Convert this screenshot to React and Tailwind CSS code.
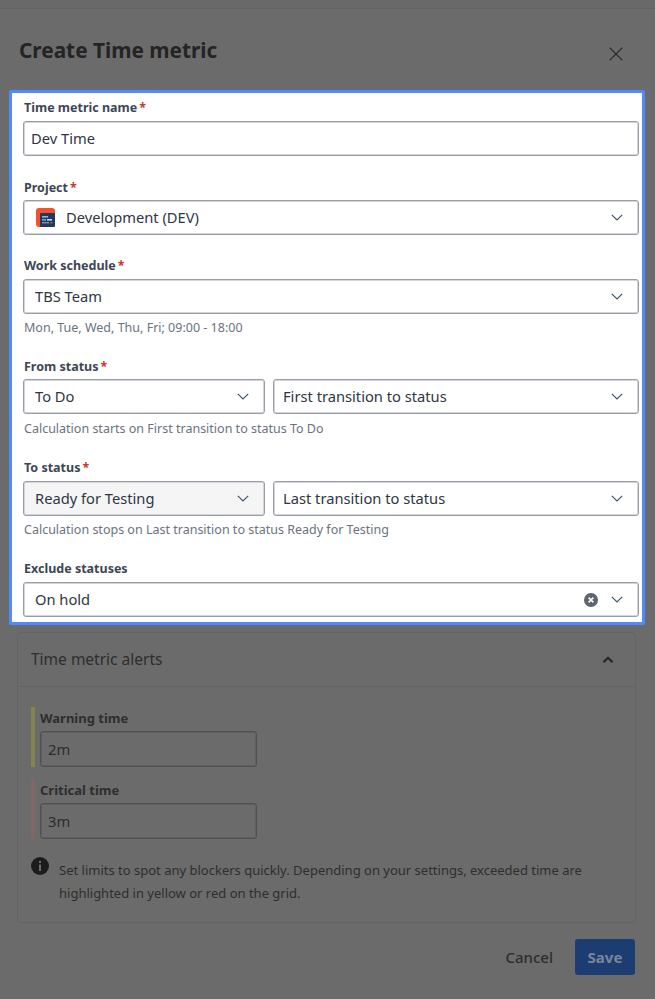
import React from "react";

const Chevron = ({ className = "text-[#42526e]" }) => (
  <svg width="12" height="7" viewBox="0 0 12 7" fill="none" className={className}>
    <path d="M.8.9 6 5.9 11.2.9" stroke="currentColor" strokeWidth="1.2" />
  </svg>
);

const Label = ({ children, req, className = "" }) => (
  <div className={`h-5 pl-[1px] pt-[1px] flex items-center text-[12.5px] font-bold leading-5 text-[#3d4655] ${className}`}>
    {children}
    {req && <span className="text-[#c9372c] ml-[2px]">*</span>}
  </div>
);

const Select = ({ children, className = "", bg = "bg-white", px = "pl-[11px]" }) => (
  <div className={`h-[35px] ${bg} ${px} pr-[15px] flex items-center justify-between rounded-[3px] border border-[#9a9da5] shadow-[inset_0_0_0_1px_#d4d5d9] text-[14.7px] text-[#2f3642] ${className}`}>
    <span className="flex items-center min-w-0">{children}</span>
    <Chevron />
  </div>
);

const Hint = ({ children, className = "" }) => (
  <div className={`pl-[1px] text-[12.5px] leading-4 text-[#6b7280] ${className}`}>{children}</div>
);

const ProjectIcon = () => (
  <svg width="19" height="19" viewBox="0 0 19 19" className="mr-[11px] shrink-0">
    <rect width="19" height="19" rx="3" fill="#f0532d" />
    <rect x="4" y="5" width="15" height="14" rx="1" fill="#1f3a5f" />
    <rect x="6" y="8" width="6" height="1.6" fill="#9fb4cc" />
    <rect x="6" y="11" width="4" height="1.6" fill="#5fb0d0" />
    <rect x="11" y="11" width="5" height="1.6" fill="#c9d6e4" />
    <rect x="6" y="14" width="7" height="1.4" fill="#7f95ad" />
    <rect x="14.5" y="14" width="2" height="1.4" fill="#e2563a" />
  </svg>
);

const TimeField = ({ label, value, bar, className = "" }) => (
  <div className={`flex h-[60px] ${className}`}>
    <div className={`w-1 ${bar} mr-[5px]`} />
    <div>
      <div className="h-[24px] flex items-center text-[13px] font-bold text-[#2e2e2e]">{label}</div>
      <div className="w-[217px] h-[36px] px-[7px] flex items-center rounded-[3px] border border-[#505050] shadow-[inset_0_0_0_1px_#606060] text-[14.7px] text-[#2b2b2b]">
        {value}
      </div>
    </div>
  </div>
);

export default function App() {
  return (
    <div className="w-[655px] h-[999px] bg-[#6b6b6b] overflow-hidden" style={{ fontFamily: '"Noto Sans", sans-serif' }}>
      <div className="h-[9px] border-b border-[#636363] bg-[#696969]" />
      <div className="h-[81px] pl-[19px] pr-[32px] pt-[26px] flex justify-between items-start">
        <h1 className="text-[20.8px] font-bold leading-[30px] text-[#242424]">Create Time metric</h1>
        <svg width="14" height="14" viewBox="0 0 14 14" fill="none" className="mt-[12px] text-[#2a2a2a]">
          <path d="M.6.6l12.8 12.8M13.4.6.6 13.4" stroke="currentColor" strokeWidth="1.3" />
        </svg>
      </div>

      <div className="ml-[9px] w-[636px] h-[535px] bg-white border-[3px] border-[#4f8bff] pl-[11px] pr-[3px] pt-[4px] rounded-[2px]">
        <Label req>Time metric name</Label>
        <div className="mt-[4px] h-[35px] pl-[7px] flex items-center rounded-[3px] border border-[#9a9da5] shadow-[inset_0_0_0_1px_#d4d5d9] text-[14.7px] text-[#2f3642]">
          Dev Time
        </div>

        <Label req className="mt-[21px]">Project</Label>
        <Select px="pl-[12px]" className="mt-[3px]"><ProjectIcon />Development (DEV)</Select>

        <Label req className="mt-[20px]">Work schedule</Label>
        <Select className="mt-[4px]">TBS Team</Select>
        <Hint className="mt-[6px]">Mon, Tue, Wed, Thu, Fri; 09:00 - 18:00</Hint>

        <Label req className="mt-[20px]">From status</Label>
        <div className="mt-[3px] flex gap-[8px]">
          <Select className="w-[242px]">To Do</Select>
          <Select px="pl-[9px]" className="flex-1">First transition to status</Select>
        </div>
        <Hint className="mt-[7px]">Calculation starts on First transition to status To Do</Hint>

        <Label req className="mt-[20px]">To status</Label>
        <div className="mt-[4px] flex gap-[8px]">
          <Select bg="bg-[#f5f5f5]" className="w-[242px]">Ready for Testing</Select>
          <Select px="pl-[9px]" className="flex-1">Last transition to status</Select>
        </div>
        <Hint className="mt-[6px]">Calculation stops on Last transition to status Ready for Testing</Hint>

        <Label className="mt-[20px]">Exclude statuses</Label>
        <div className="mt-[4px] h-[35px] pl-[11px] pr-[15px] flex items-center justify-between rounded-[3px] border border-[#9a9da5] shadow-[inset_0_0_0_1px_#d4d5d9] text-[14.7px] text-[#2f3642]">
          <span>On hold</span>
          <span className="flex items-center gap-[13px]">
            <svg width="14" height="14" viewBox="0 0 14 14" fill="none">
              <circle cx="7" cy="7" r="7" fill="#5e6470" />
              <path d="M4.6 4.6l4.8 4.8M9.4 4.6 4.6 9.4" stroke="#fff" strokeWidth="1.6" />
            </svg>
            <Chevron />
          </span>
        </div>
      </div>

      <div className="ml-[17px] mt-[7px] w-[619px] h-[291px] rounded-[4px] border border-[#646464]">
        <div className="h-[54px] pl-[13px] pr-[21px] flex items-center justify-between border-b border-[#646464]">
          <span className="text-[15.5px] text-[#2e2e2e]">Time metric alerts</span>
          <svg width="12" height="8" viewBox="0 0 12 8" fill="none">
            <path d="M1.5 6.2 6 1.8l4.5 4.4" stroke="#222" strokeWidth="2" />
          </svg>
        </div>
        <div className="pl-[13px] pt-[20px]">
          <TimeField label="Warning time" value="2m" bar="bg-[#87834f]" />
          <TimeField label="Critical time" value="3m" bar="bg-[#846664]" className="mt-[12px]" />
          <div className="flex mt-[18px]">
            <svg width="18" height="18" viewBox="0 0 18 18" className="shrink-0">
              <circle cx="9" cy="9" r="9" fill="#1c1c1c" />
              <rect x="8" y="4" width="2" height="2" fill="#6b6b6b" />
              <rect x="8" y="7.5" width="2" height="6.5" fill="#6b6b6b" />
            </svg>
            <p className="ml-[10px] mt-[2px] w-[535px] text-[13px] leading-[22.5px] text-[#2e2e2e]">
              Set limits to spot any blockers quickly. Depending on your settings, exceeded time are highlighted in yellow or red on the grid.
            </p>
          </div>
        </div>
      </div>

      <div className="mt-[16px] w-[635px] flex justify-end items-center">
        <span className="text-[15px] font-medium text-[#2e2e2e] mr-[22px]">Cancel</span>
        <div className="w-[60px] h-[36px] rounded-[3px] bg-[#1c3d72] flex items-center justify-center text-[15px] font-bold text-[#7a8699]">
          Save
        </div>
      </div>
    </div>
  );
}
